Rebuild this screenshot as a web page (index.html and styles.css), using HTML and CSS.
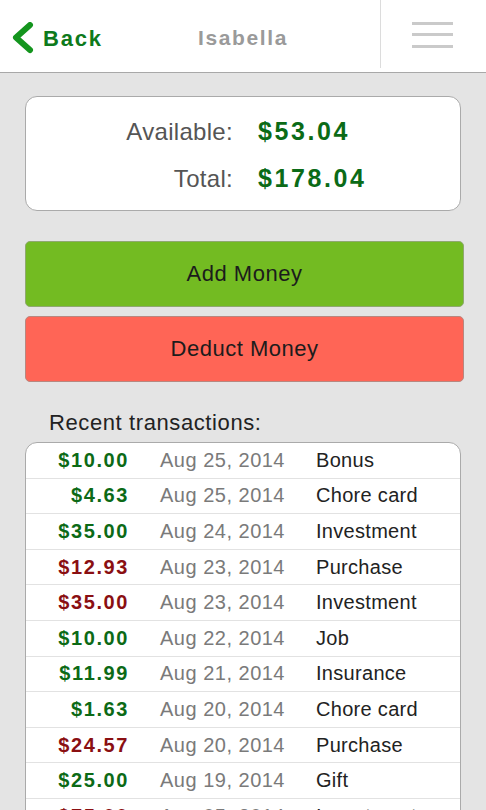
FILE: index.html
```html
<!DOCTYPE html>
<html>
<head>
<title>Isabella</title>
<meta name="viewport" content="width=device-width, initial-scale=1">
<link rel="stylesheet" href="styles.css">
</head>
<body>

<div class="topbar">
  <a class="back" href="#">
    <svg width="24" height="34" viewBox="0 0 24 34">
      <path d="M19 3 L5 15.5 L19 28" fill="none" stroke="#14951e" stroke-width="6" stroke-linecap="round" stroke-linejoin="round"/>
    </svg>
    <span>Back</span>
  </a>
  <div class="title">Isabella</div>
  <div class="menu">
    <span></span><span></span><span></span>
  </div>
</div>

<div class="content">

  <div class="summary">
    <div class="label">Available:</div>
    <div class="value">$53.04</div>
    <div class="label">Total:</div>
    <div class="value">$178.04</div>
  </div>

  <button class="btn add">Add Money</button>
  <button class="btn deduct">Deduct Money</button>

  <p class="recent">Recent transactions:</p>

  <div class="transactions">
    <div class="row"><span class="amt plus">$10.00</span><span class="date">Aug 25, 2014</span><span class="desc">Bonus</span></div>
    <div class="row"><span class="amt plus">$4.63</span><span class="date">Aug 25, 2014</span><span class="desc">Chore card</span></div>
    <div class="row"><span class="amt plus">$35.00</span><span class="date">Aug 24, 2014</span><span class="desc">Investment</span></div>
    <div class="row"><span class="amt minus">$12.93</span><span class="date">Aug 23, 2014</span><span class="desc">Purchase</span></div>
    <div class="row"><span class="amt minus">$35.00</span><span class="date">Aug 23, 2014</span><span class="desc">Investment</span></div>
    <div class="row"><span class="amt plus">$10.00</span><span class="date">Aug 22, 2014</span><span class="desc">Job</span></div>
    <div class="row"><span class="amt plus">$11.99</span><span class="date">Aug 21, 2014</span><span class="desc">Insurance</span></div>
    <div class="row"><span class="amt plus">$1.63</span><span class="date">Aug 20, 2014</span><span class="desc">Chore card</span></div>
    <div class="row"><span class="amt minus">$24.57</span><span class="date">Aug 20, 2014</span><span class="desc">Purchase</span></div>
    <div class="row"><span class="amt plus">$25.00</span><span class="date">Aug 19, 2014</span><span class="desc">Gift</span></div>
    <div class="row"><span class="amt minus">$75.00</span><span class="date">Aug 05, 2014</span><span class="desc">Investment</span></div>
  </div>

</div>

</body>
</html>
```

FILE: styles.css
```css
body {
  margin: 0;
  background-color: #e4e4e4;
  font-family: "Liberation Sans", Arial, sans-serif;
  color: #222;
  overflow: hidden;
}

.topbar {
  display: flex;
  align-items: center;
  height: 72px;
  background-color: white;
  border-bottom: 1px solid #a8a8a8;
}

.back {
  display: flex;
  align-items: center;
  width: 120px;
  padding: 5px 0 0 11px;
  box-sizing: border-box;
  text-decoration: none;
  color: #0e7a1b;
  font-weight: bold;
  font-size: 22px;
  letter-spacing: 1.8px;
}

.back svg {
  margin-right: 8px;
}

.title {
  flex: 1;
  padding: 3px 14px 0 0;
  text-align: center;
  color: #9a9a9a;
  font-weight: bold;
  font-size: 21px;
  letter-spacing: 1.6px;
}

.menu {
  display: flex;
  flex-direction: column;
  justify-content: center;
  gap: 8.5px;
  align-self: flex-start;
  width: 106px;
  height: 68px;
  box-sizing: border-box;
  padding: 1px 0 0 31px;
  border-left: 1px solid #dcdcdc;

  & span {
    display: block;
    width: 41px;
    height: 3px;
    background-color: #cacaca;
  }
}

.content {
  padding: 23px 22px 0 25px;
}

.summary {
  display: grid;
  grid-template-columns: 207px auto;
  column-gap: 25px;
  align-items: center;
  margin-right: 3px;
  padding: 11px 0 8px;
  background-color: white;
  border: 1px solid #aaa;
  border-radius: 12px;

  & .label {
    height: 47px;
    line-height: 47px;
    text-align: right;
    color: #555;
    font-size: 24px;
    letter-spacing: 0.3px;
  }

  & .value {
    height: 47px;
    line-height: 47px;
    color: #0b6b17;
    font-weight: bold;
    font-size: 25px;
    letter-spacing: 2.6px;
  }
}

.btn {
  display: block;
  width: 100%;
  height: 66px;
  margin-top: 30px;
  border: 1px solid #8fa870;
  border-radius: 5px;
  background-color: #73bb22;
  color: #1c1c1c;
  font-family: "Liberation Sans", Arial, sans-serif;
  font-size: 22px;
  letter-spacing: 0.5px;
}

.btn.deduct {
  margin-top: 9px;
  background-color: #ff6556;
  border-color: #b8877f;
}

.recent {
  margin: 28px 0 6px 24px;
  font-size: 22px;
  letter-spacing: 0.6px;
}

.transactions {
  margin-right: 3px;
  background-color: white;
  border: 1px solid #aaa;
  border-radius: 12px 12px 0 0;
}

.row {
  display: flex;
  align-items: center;
  height: 34.6px;
  border-bottom: 1px solid #e2e2e2;
  font-size: 20px;

  & .amt {
    width: 103px;
    text-align: right;
    font-weight: bold;
    letter-spacing: 1.6px;
  }

  & .plus {
    color: #0c6a16;
  }

  & .minus {
    color: #8a0f12;
  }

  & .date {
    width: 156px;
    margin-left: 31px;
    color: #7a7a7a;
    letter-spacing: 0.5px;
  }

  & .desc {
    letter-spacing: 0.3px;
  }
}
```
